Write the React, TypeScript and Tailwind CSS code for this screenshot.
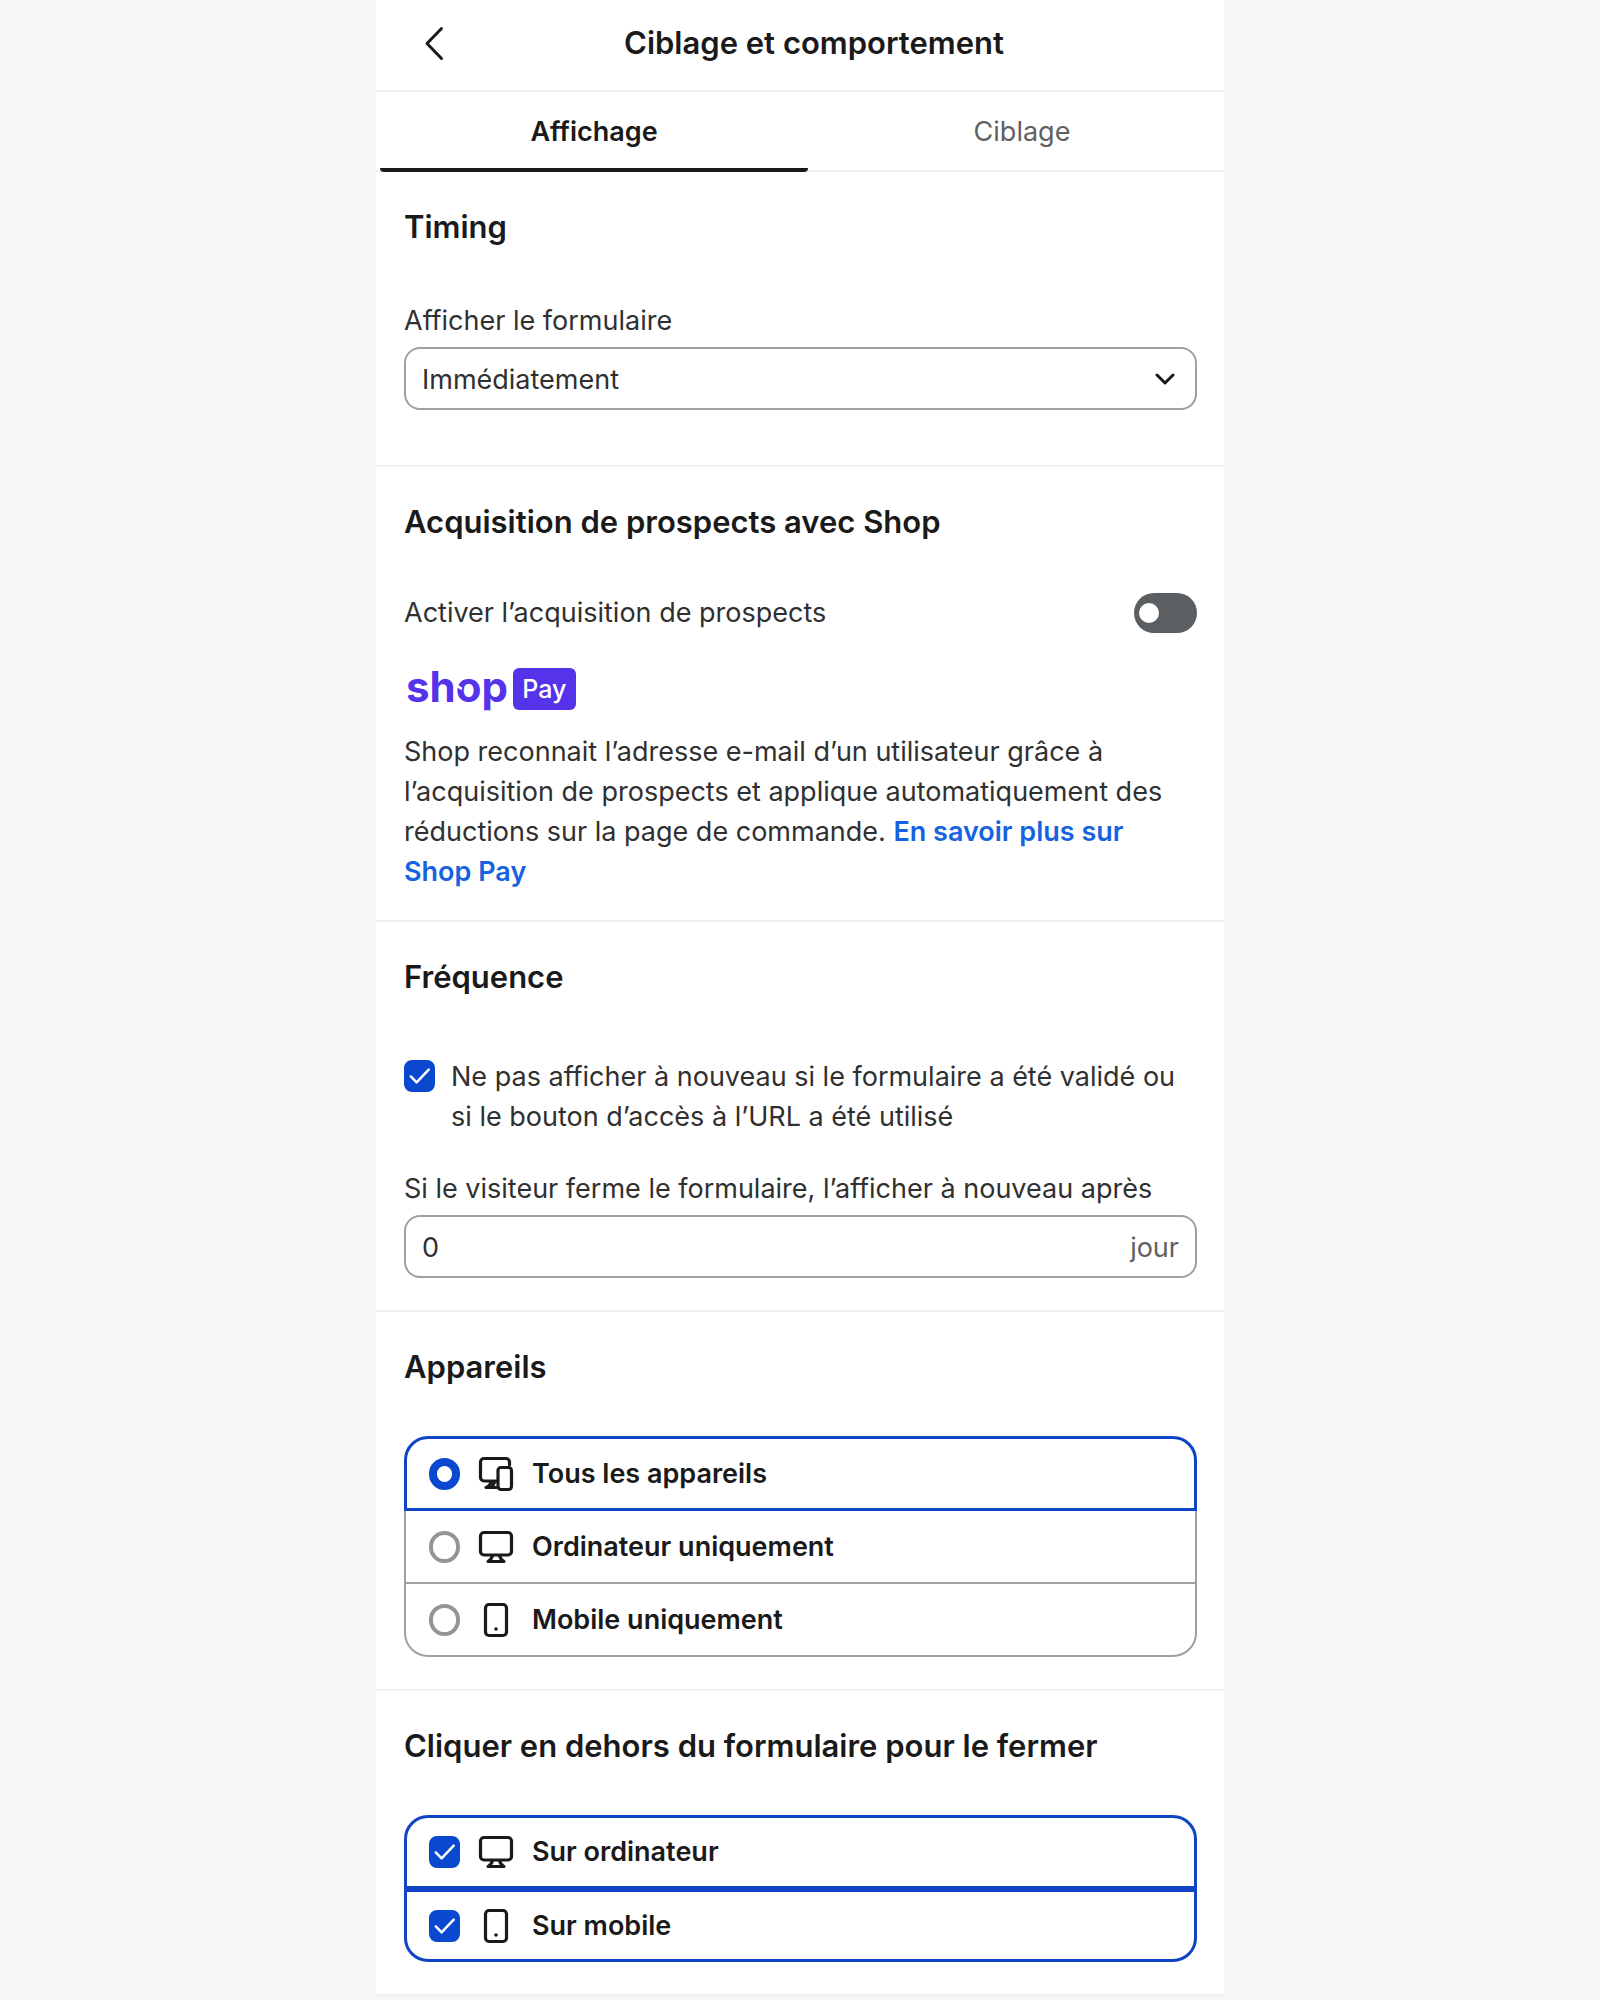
import { useId, useState } from "react";
import type { ReactNode } from "react";
import clsx from "clsx";

type IconProps = { className?: string };

function BackIcon() {
  return (
    <svg viewBox="0 0 28 36" className="h-9 w-7" fill="none" aria-hidden="true">
      <path
        d="M17.5 3.5 3 18.5l14.5 15"
        stroke="currentColor"
        strokeWidth="3"
        strokeLinecap="round"
        strokeLinejoin="round"
      />
    </svg>
  );
}

function ChevronIcon({ className }: IconProps) {
  return (
    <svg viewBox="0 0 20 12" className={className} fill="none" aria-hidden="true">
      <path
        d="M2 2l8 8 8-8"
        stroke="currentColor"
        strokeWidth="3"
        strokeLinecap="round"
        strokeLinejoin="round"
      />
    </svg>
  );
}

function CheckIcon({ className }: IconProps) {
  return (
    <svg viewBox="0 0 32 32" className={className} fill="none" aria-hidden="true">
      <path
        d="M7 16.5l6 6L25.5 9.5"
        stroke="currentColor"
        strokeWidth="2.6"
        strokeLinecap="round"
        strokeLinejoin="round"
      />
    </svg>
  );
}

function DevicesIcon() {
  return (
    <svg viewBox="0 0 36 36" className="size-9" fill="none" aria-hidden="true">
      <g stroke="currentColor" strokeWidth="3.2" strokeLinecap="round" strokeLinejoin="round">
        <path d="M31.5 9V6A3.5 3.5 0 0 0 28 2.500H6A3.500 3.500 0 0 0 2.500 6v15.500A3.500 3.500 0 0 0 6 25h13" />
        <path d="M13 25.500c-.5 3-2 5-5 6h10" />
        <path d="M13.500 31c1.500-1.500 2.500-3 3-5" />
        <rect x="20" y="11.500" width="13.500" height="22" rx="3" />
      </g>
    </svg>
  );
}

function DesktopIcon() {
  return (
    <svg viewBox="0 0 36 36" className="size-9" fill="none" aria-hidden="true">
      <g stroke="currentColor" strokeWidth="3.2" strokeLinecap="round" strokeLinejoin="round">
        <rect x="2.500" y="3.500" width="31" height="22.500" rx="3.500" />
        <path d="M14.500 26.500c-.5 2.500-2 4.500-4.500 6h16c-2.500-1.500-4-3.500-4.500-6" />
      </g>
    </svg>
  );
}

function MobileIcon() {
  return (
    <svg viewBox="0 0 36 36" className="size-9" fill="none" aria-hidden="true">
      <rect x="7.500" y="2.500" width="21" height="31" rx="3.500" stroke="currentColor" strokeWidth="3.2" />
      <circle cx="18" cy="27" r="1.800" fill="currentColor" />
    </svg>
  );
}

function ShopPayLogo() {
  return (
    <div className="flex h-[42px] items-center gap-[5px] pl-0.5 text-[#5433eb]">
      <span className="relative pb-1 text-[42px] font-bold leading-9">
        shop
        {/* notch in the ring of the "o" */}
        <svg
          viewBox="0 0 8 8"
          className="absolute left-12 top-[15px] size-2"
          fill="none"
          aria-hidden="true"
        >
          <path d="M0 0l8 5" stroke="white" strokeWidth="2.5" />
        </svg>
      </span>
      <span className="flex h-[42px] w-[63px] items-center justify-center rounded-md bg-[#5433eb] text-[25px] font-medium text-white">
        Pay
      </span>
    </div>
  );
}

function Checkbox({
  id,
  checked,
  onChange,
}: {
  id: string;
  checked: boolean;
  onChange: (checked: boolean) => void;
}) {
  return (
    <span className="grid shrink-0">
      <input
        id={id}
        type="checkbox"
        checked={checked}
        onChange={(e) => onChange(e.target.checked)}
        className="col-start-1 row-start-1 h-8 w-[31px] appearance-none rounded-lg border-2 border-[#8a8a8a] checked:border-[#0a48cf] checked:bg-[#0a48cf]"
      />
      {checked && (
        <CheckIcon className="pointer-events-none col-start-1 row-start-1 h-8 w-[31px] text-white" />
      )}
    </span>
  );
}

function Section({ title, children }: { title: string; children: ReactNode }) {
  return (
    <section className="border-b-2 border-[#f1f1f1] bg-white pl-7 pr-[27px] pt-[37px]">
      <h2 className="text-[31px] font-semibold leading-9 text-[#1a1a1a]">{title}</h2>
      {children}
    </section>
  );
}

const tabs = ["Affichage", "Ciblage"];

const devices = [
  { value: "all", label: "Tous les appareils", icon: <DevicesIcon /> },
  { value: "desktop", label: "Ordinateur uniquement", icon: <DesktopIcon /> },
  { value: "mobile", label: "Mobile uniquement", icon: <MobileIcon /> },
];

const closeOptions = [
  { value: "desktop", label: "Sur ordinateur", icon: <DesktopIcon /> },
  { value: "mobile", label: "Sur mobile", icon: <MobileIcon /> },
];

export default function App() {
  const id = useId();
  const [tab, setTab] = useState("Affichage");
  const [leadCapture, setLeadCapture] = useState(false);
  const [hideAfterSubmit, setHideAfterSubmit] = useState(true);
  const [days, setDays] = useState("0");
  const [device, setDevice] = useState("all");
  const [closeOn, setCloseOn] = useState(["desktop", "mobile"]);

  const toggleClose = (value: string, on: boolean) =>
    setCloseOn((prev) => (on ? [...prev, value] : prev.filter((v) => v !== value)));

  return (
    <div className="min-h-screen bg-[#f6f6f6] font-[Inter,sans-serif] text-[27px] leading-10 text-[#303030]">
      <main className="mx-auto w-full max-w-[848px] overflow-hidden">
        <header className="flex h-[92px] items-center border-b-2 border-[#f1f1f1] bg-white px-12 pb-1">
          <button type="button" aria-label="Retour" className="text-[#1a1a1a]">
            <BackIcon />
          </button>
          <h1 className="flex-1 text-center text-[31px] font-semibold text-[#1a1a1a]">
            Ciblage et comportement
          </h1>
        </header>

        <div className="bg-white">
          <div role="tablist" className="-mr-3 flex h-20 border-b-2 border-[#f1f1f1] pl-1">
            {tabs.map((name) => (
              <button
                key={name}
                type="button"
                role="tab"
                aria-selected={tab === name}
                onClick={() => setTab(name)}
                className={clsx(
                  "-mb-0.5 flex-1 rounded-sm border-b-4 pt-1",
                  tab === name
                    ? "border-[#1a1a1a] font-semibold text-[#1a1a1a]"
                    : "border-transparent text-[#616161]",
                )}
              >
                {name}
              </button>
            ))}
          </div>
        </div>

        <Section title="Timing">
          <div className="flex flex-col gap-1.5 pb-[55px] pt-14">
            <label htmlFor={`${id}-timing`}>Afficher le formulaire</label>
            <div className="grid items-center">
              <select
                id={`${id}-timing`}
                className="col-start-1 row-start-1 h-[63px] w-full appearance-none rounded-2xl border-2 border-[#a0a0a0] bg-white px-4 pt-0.5"
              >
                <option>Immédiatement</option>
              </select>
              <ChevronIcon className="pointer-events-none col-start-1 row-start-1 mr-[22px] h-3 w-5 justify-self-end text-[#1a1a1a]" />
            </div>
          </div>
        </Section>

        <Section title="Acquisition de prospects avec Shop">
          <div className="flex items-center justify-between pt-[53px]">
            <label htmlFor={`${id}-lead`}>Activer l’acquisition de prospects</label>
            <button
              id={`${id}-lead`}
              type="button"
              role="switch"
              aria-checked={leadCapture}
              onClick={() => setLeadCapture(!leadCapture)}
              className={clsx(
                "flex h-10 w-[63px] items-center rounded-full px-[5px]",
                leadCapture ? "justify-end bg-[#0a48cf]" : "bg-[#5c5f62]",
              )}
            >
              <span className="size-5 rounded-full bg-white" />
            </button>
          </div>
          <div className="pt-[35px]">
            <ShopPayLogo />
          </div>
          <p className="pb-7 pt-[22px]">
            Shop reconnait l’adresse e-mail d’un utilisateur grâce à l’acquisition de prospects et
            applique automatiquement des réductions sur la page de commande.{" "}
            <a href="#shop-pay" className="font-semibold text-[#1662e0]">
              En savoir plus sur Shop Pay
            </a>
          </p>
        </Section>

        <Section title="Fréquence">
          <div className="flex gap-4 pt-[62px]">
            <span className="flex h-[38px] items-center">
              <Checkbox
                id={`${id}-hide`}
                checked={hideAfterSubmit}
                onChange={setHideAfterSubmit}
              />
            </span>
            <label htmlFor={`${id}-hide`}>
              Ne pas afficher à nouveau si le formulaire a été validé ou si le bouton d’accès à
              l’URL a été utilisé
            </label>
          </div>
          <div className="flex flex-col gap-1.5 pb-8 pt-8">
            <label htmlFor={`${id}-days`}>
              Si le visiteur ferme le formulaire, l’afficher à nouveau après
            </label>
            <div className="flex h-[63px] items-center rounded-2xl border-2 border-[#a0a0a0] px-4 pt-0.5">
              <input
                id={`${id}-days`}
                type="text"
                inputMode="numeric"
                value={days}
                onChange={(e) => setDays(e.target.value)}
                className="min-w-0 flex-1 bg-transparent outline-none"
              />
              <span className="text-[#616161]">jour</span>
            </div>
          </div>
        </Section>

        <Section title="Appareils">
          <div role="radiogroup" aria-label="Appareils" className="pb-8 pt-[51px]">
            {devices.map((d) => (
              <label
                key={d.value}
                className={clsx(
                  "flex h-[73px] items-center font-semibold text-[#1a1a1a] first:h-[75px] first:rounded-t-3xl last:rounded-b-3xl",
                  device === d.value
                    ? "border-[3px] border-[#0f45c4] pl-[22px]"
                    : "border-2 border-t-0 border-[#a0a0a0] pl-[23px]",
                )}
              >
                <input
                  type="radio"
                  name={`${id}-device`}
                  value={d.value}
                  checked={device === d.value}
                  onChange={() => setDevice(d.value)}
                  className="h-8 w-[31px] shrink-0 appearance-none rounded-full border-4 border-[#949494] checked:border-8 checked:border-[#0a48cf]"
                />
                <span className="pl-[18px]">{d.icon}</span>
                <span className="pl-[18px]">{d.label}</span>
              </label>
            ))}
          </div>
        </Section>

        <Section title="Cliquer en dehors du formulaire pour le fermer">
          <div className="pb-8 pt-[51px]">
            {closeOptions.map((o) => {
              const checked = closeOn.includes(o.value);
              return (
                <label
                  key={o.value}
                  className={clsx(
                    "flex h-[73px] items-center border-[3px] pl-[22px] font-semibold text-[#1a1a1a] first:h-[74px] first:rounded-t-3xl last:rounded-b-3xl",
                    checked ? "border-[#0f45c4]" : "border-[#a0a0a0]",
                  )}
                >
                  <Checkbox
                    id={`${id}-close-${o.value}`}
                    checked={checked}
                    onChange={(on) => toggleClose(o.value, on)}
                  />
                  <span className="pl-[18px]">{o.icon}</span>
                  <span className="pl-[18px]">{o.label}</span>
                </label>
              );
            })}
          </div>
        </Section>
      </main>
    </div>
  );
}
